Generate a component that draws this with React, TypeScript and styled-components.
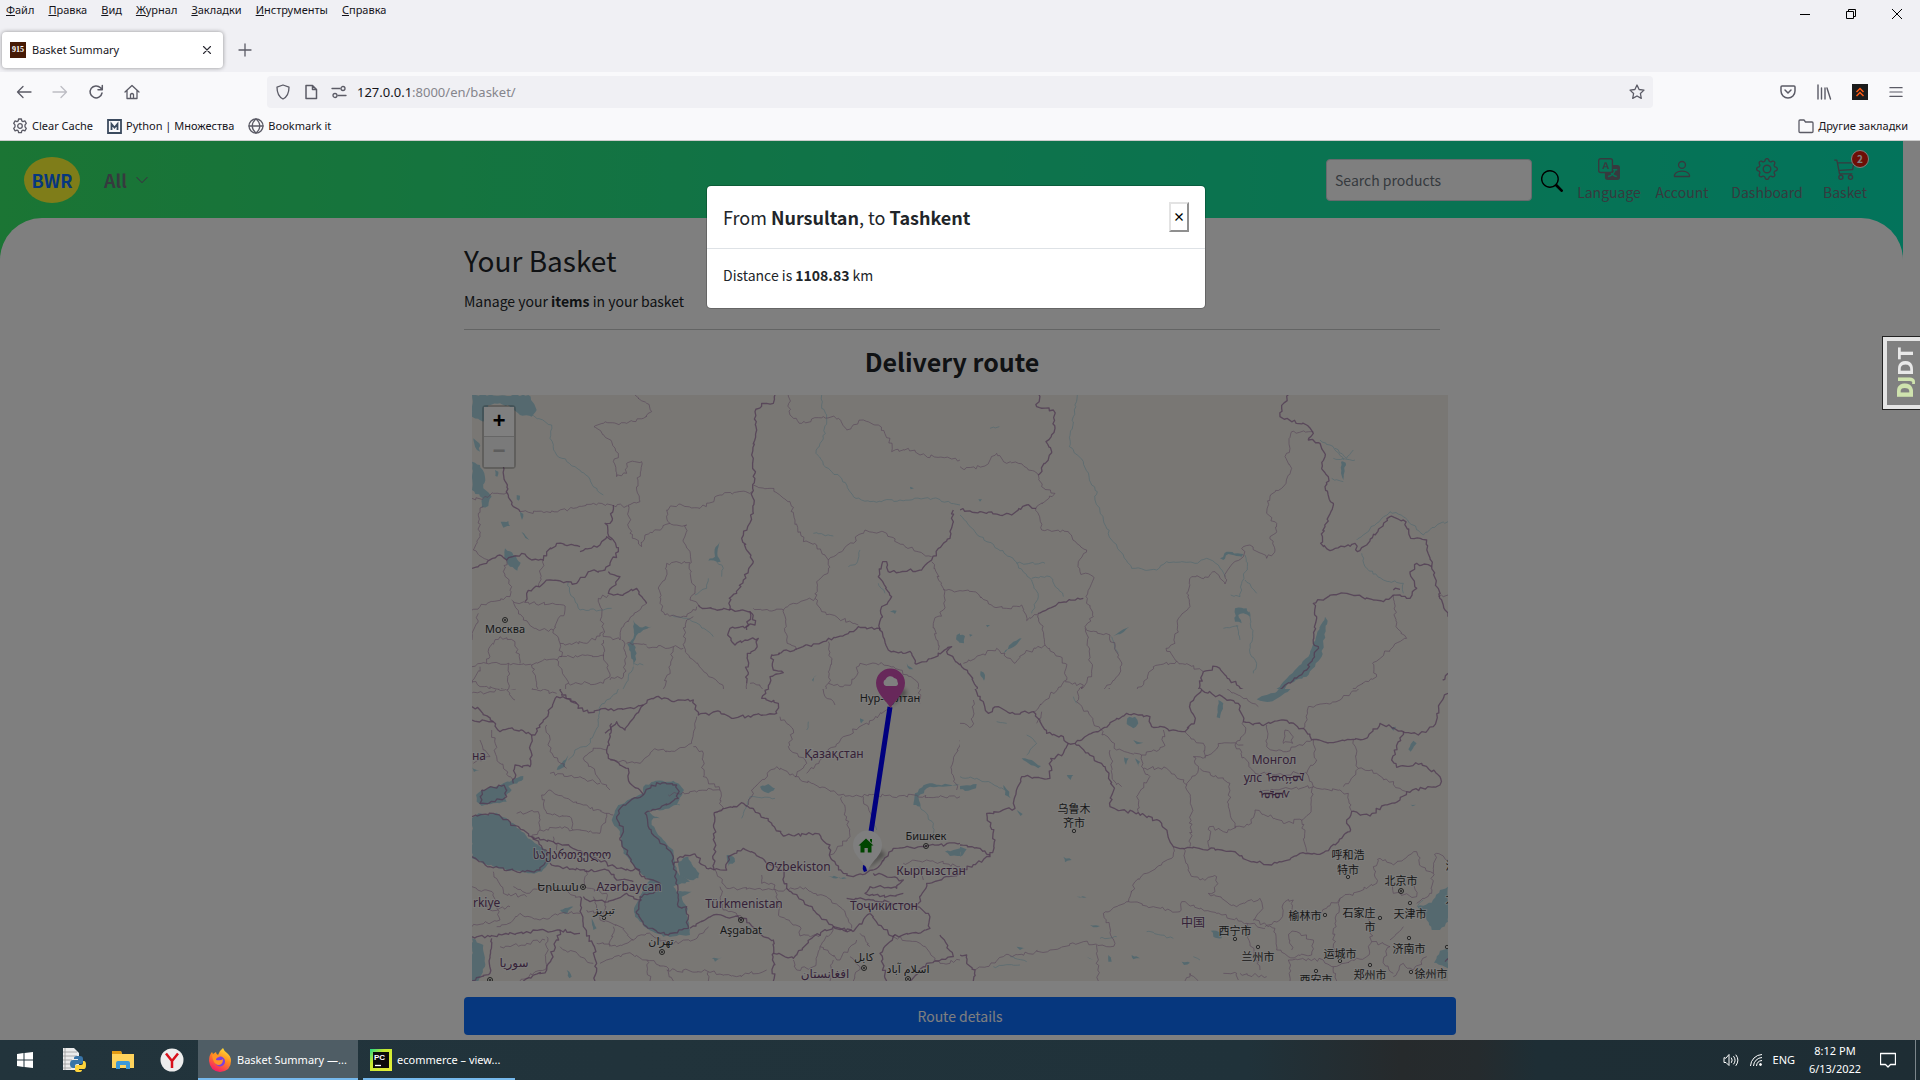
import React from 'react';
import styled, { createGlobalStyle, css } from 'styled-components';
import { BsCart3, BsChevronDown, BsGear, BsPerson, BsSearch, BsTranslate } from 'react-icons/bs';

const uiFont = `'Noto Sans', 'Open Sans', 'Noto Sans CJK SC', sans-serif`;
const pageFont = `'Noto Sans CJK SC', 'Noto Sans', sans-serif`;

const Global = createGlobalStyle`
  *, *::before, *::after { box-sizing: border-box; }
  body { margin: 0; font-family: ${pageFont}; font-size: 14px; line-height: 24px; color: #212529; }
  button, input { font: inherit; color: inherit; }
  button { border: 0; padding: 0; background: none; cursor: pointer; }
  a { color: inherit; text-decoration: none; }
  h1, h2, h3, p { margin: 0; }
  svg { display: block; flex: none; }
`;

/* ---------- browser chrome ---------- */

const Screen = styled.div`
  display: flex;
  flex-direction: column;
  height: 100vh;
  overflow: hidden;
`;

const Chrome = styled.header`
  flex: none;
  font-family: ${uiFont};
  font-size: 11px;
  line-height: 16px;
  color: #15141a;
  background: #f9f9fb;
  border-bottom: 1px solid #cccccc;
`;

const TitleArea = styled.div`
  height: 72px;
  background: #f0f0f4;
`;

const MenuRow = styled.div`
  display: flex;
  justify-content: space-between;
  height: 28px;
`;

const MenuBar = styled.nav`
  display: flex;
  align-items: flex-start;
  gap: 14px;
  padding: 2px 6px;
`;

const WindowButtons = styled.div`
  display: flex;
`;

const WindowButton = styled.button`
  display: grid;
  place-items: center;
  width: 46px;
  height: 28px;
`;

const TabRow = styled.div`
  display: flex;
  align-items: center;
  gap: 12px;
  padding: 4px 2px;
`;

const Tab = styled.div`
  display: flex;
  align-items: center;
  gap: 6px;
  width: 221px;
  height: 36px;
  padding: 0 8px;
  border-radius: 4px;
  background: #fff;
  box-shadow: 0 0 4px rgba(0, 0, 0, 0.4);

  span { flex: 1; }
`;

const Favicon = styled.i`
  display: grid;
  place-items: center;
  width: 16px;
  height: 16px;
  background: #461a05;
  color: #fff;
  font: bold 8px/16px 'Liberation Serif', serif;
`;

const IconButton = styled.button<{ $w?: number }>`
  display: grid;
  place-items: center;
  width: ${p => p.$w ?? 20}px;
  height: 20px;
  color: #5b5b66;
`;

const Toolbar = styled.div`
  display: flex;
  align-items: center;
  height: 40px;
  padding: 0 14px;
`;

const NavGroup = styled.div`
  display: flex;
  gap: 16px;
`;

const UrlBar = styled.div`
  display: flex;
  flex: 1;
  align-items: center;
  gap: 8px;
  height: 32px;
  margin: 0 125px 0 125px;
  padding: 0 6px;
  border-radius: 4px;
  background: #f0f0f4;
`;

const Address = styled.a`
  flex: 1;
  font-size: 13px;
  line-height: 20px;
  color: #85858c;

  b { font-weight: 400; color: #15141a; }
`;

const Bookmarks = styled.div`
  display: flex;
  align-items: center;
  gap: 14px;
  height: 28px;
  padding: 0 12px;
`;

const Bookmark = styled.a<{ $end?: boolean }>`
  display: flex;
  align-items: center;
  gap: 4px;
  color: #15141a;
  ${p => p.$end && css`margin-left: auto;`}
`;

/* ---------- shop page ---------- */

const Viewport = styled.div`
  position: relative;
  flex: 1;
  min-height: 0;
  overflow: hidden;
  background: #fff;
`;

const Banner = styled.div`
  margin-right: 17px;
  background: linear-gradient(90deg, #36ea68, #1ee694 48%, #06e6b6);
`;

const NavBar = styled.div`
  display: flex;
  align-items: center;
  height: 77px;
  padding: 0 22px 0 24px;
`;

const Brand = styled.a`
  display: grid;
  place-items: center;
  width: 56px;
  height: 46px;
  border-radius: 50%;
  background: #fffb32;
  color: #0d6efd;
  font-size: 18px;
  font-weight: 700;
`;

const Category = styled.button`
  display: flex;
  align-items: center;
  gap: 8px;
  margin-left: 24px;
  color: #6c757d;
  font-size: 18px;
  font-weight: 700;
`;

const Search = styled.form`
  display: flex;
  align-items: center;
  gap: 8px;
  margin-left: auto;
`;

const SearchInput = styled.input`
  width: 206px;
  height: 42px;
  padding: 0 8px;
  border: 1px solid #ced4da;
  border-radius: 4px;
  background: #fff;

  &::placeholder { color: #6c757d; opacity: 1; }
`;

const Links = styled.nav`
  display: flex;
  align-items: center;
  margin-left: 15px;
  color: #6c757d;
  font-size: 14px;
  line-height: 20px;
`;

const NavLink = styled.a<{ $w: number }>`
  position: relative;
  display: flex;
  flex-direction: column;
  align-items: center;
  gap: 2px;
  width: ${p => p.$w}px;
`;

const Badge = styled.span`
  position: absolute;
  top: -8px;
  left: 50%;
  width: 18px;
  height: 18px;
  margin-left: 6px;
  border: 1px solid #fff;
  border-radius: 50%;
  background: #dc1c0c;
  color: #fff;
  font-size: 10px;
  font-weight: 700;
  line-height: 16px;
  text-align: center;
`;

const Sheet = styled.div`
  height: 42px;
  border-radius: 42px 42px 0 0;
  background: #fff;
`;

const Content = styled.main`
  width: 100%;
  max-width: 992px;
  margin: -20px auto 0;
`;

const Title = styled.h1`
  font-size: 28px;
  font-weight: 400;
  line-height: 40px;
`;

const Lead = styled.p`
  padding: 9px 0 16px;
`;

const Rule = styled.hr`
  height: 1px;
  margin: 0 16px 0 0;
  border: 0;
  background: #c7c8c9;
`;

const RouteTitle = styled.h2`
  padding: 13px 16px 16px 0;
  font-size: 25px;
  font-weight: 700;
  line-height: 36px;
  text-align: center;
`;

const MapBox = styled.section`
  position: relative;
  height: 586px;
  margin: 0 8px;
  overflow: hidden;
  background: #f2efe9;
`;

const ZoomControl = styled.div`
  position: absolute;
  top: 10px;
  left: 10px;
  width: 34px;
  border: 2px solid rgba(0, 0, 0, 0.2);
  border-radius: 4px;
  background-clip: padding-box;
`;

const ZoomButton = styled.button<{ $off?: boolean }>`
  display: block;
  width: 30px;
  height: 30px;
  background: ${p => (p.$off ? '#f4f4f4' : '#fff')};
  color: ${p => (p.$off ? '#bbb' : '#000')};
  border-bottom: ${p => (p.$off ? '0' : '1px solid #ccc')};
  font: bold 22px/32px 'Liberation Mono', monospace;
`;

const Primary = styled.button`
  display: block;
  width: 100%;
  height: 38px;
  margin-top: 16px;
  border-radius: 4px;
  background: #0d6efd;
  color: #fff;
`;

const Backdrop = styled.div`
  position: absolute;
  inset: 0;
  display: flex;
  justify-content: center;
  align-items: flex-start;
  padding: 44px 8px 0 0;
  background: rgba(0, 0, 0, 0.5);
`;

const Dialog = styled.div`
  width: 100%;
  max-width: 500px;
  border: 1px solid rgba(0, 0, 0, 0.2);
  border-radius: 5px;
  background: #fff;
  background-clip: padding-box;
`;

const DialogHead = styled.div`
  display: flex;
  align-items: center;
  justify-content: space-between;
  padding: 15px 16px;
  border-bottom: 1px solid #dee2e6;

  h2 { font-size: 18px; font-weight: 400; line-height: 32px; }
`;

const Close = styled.button`
  width: 20px;
  height: 30px;
  border: 2px outset #e3e3e3;
  background: #fff;
  color: #000;
  font-size: 12px;
  font-weight: 700;
  line-height: 22px;
`;

const DialogBody = styled.div`
  padding: 14px 16px 21px;
`;

const DebugHandle = styled.button`
  position: absolute;
  top: 195px;
  right: 0;
  display: grid;
  place-items: center;
  width: 38px;
  height: 74px;
  padding-left: 4px;
  border: 1px solid #222;
  border-right: 0;
  background: #808080;
  box-shadow: inset 4px 0 #e4e4e4, inset 0 4px #e4e4e4, inset 0 -4px #e4e4e4;
  color: #e8e8e8;
  font: bold 22px/24px 'Open Sans', sans-serif;

  span { writing-mode: vertical-rl; rotate: 180deg; }
  b { color: #cfe3ae; }
  small { font-size: 18px; }
`;

/* ---------- taskbar ---------- */

const Taskbar = styled.footer`
  display: flex;
  flex: none;
  align-items: stretch;
  height: 40px;
  background: linear-gradient(90deg, #22343c, #20323a 65%, #262a2c 73%, #252b2e 77%, #1e2e35 80%, #1e2d34);
  color: #fff;
  font-family: ${uiFont};
  font-size: 11px;
  line-height: 18px;
`;

const Pin = styled.button`
  display: grid;
  place-items: center;
  width: 49px;
`;

const Task = styled.button<{ $active?: boolean }>`
  display: flex;
  align-items: center;
  gap: 5px;
  width: ${p => (p.$active ? 160 : 152)}px;
  margin-left: ${p => (p.$active ? 2 : 5)}px;
  padding: 0 ${p => (p.$active ? 10 : 7)}px;
  border-bottom: 2px solid #76b9ed;
  border-top: 2px solid transparent;
  background: ${p => (p.$active ? '#4f5d65' : 'transparent')};
  background-clip: border-box;
  white-space: nowrap;
`;

const Tray = styled.div`
  display: flex;
  align-items: center;
  gap: 11px;
  margin-left: auto;
`;

const Clock = styled.time`
  width: 58px;
  margin-right: 5px;
  text-align: center;
`;

const ShowDesktop = styled.button`
  align-self: stretch;
  width: 5px;
  margin-left: 8px;
  border-left: 1px solid #7c868b;
`;

/* ---------- map drawing ---------- */

type Pt = [number, number];

const parse = (s: string): Pt[] =>
  s.trim().split(/\s+/).map(p => p.split(',').map(Number) as Pt);

/* Breaks straight runs into small irregular steps, as surveyed borders have. */
const rough = (s: string, amount: number, close = false) => {
  const pts = parse(s);
  if (close) pts.push(pts[0]);
  let seed = Math.round(pts[0][0] * 7 + pts[0][1] * 13 + 5);
  const rnd = () => {
    seed = (seed * 16807 + 11) % 2147483647;
    return (seed % 1000) / 1000 - 0.5;
  };
  let d = `M${pts[0]}`;
  for (let i = 1; i < pts.length; i++) {
    const [x0, y0] = pts[i - 1];
    const [x1, y1] = pts[i];
    const n = Math.max(1, Math.round(Math.hypot(x1 - x0, y1 - y0) / 9));
    for (let k = 1; k < n; k++) {
      const t = k / n;
      d += `L${(x0 + (x1 - x0) * t + rnd() * amount).toFixed(1)},${(y0 + (y1 - y0) * t + rnd() * amount).toFixed(1)}`;
    }
    d += `L${x1},${y1}`;
  }
  return close ? d + 'Z' : d;
};

interface MapSheet {
  at: string;
  water: string[];
  rivers: string[];
  thick: string[];
  thin: string[];
}

const sheets: MapSheet[] = [
  {
    at: 'translate(-12 -15) scale(.33333)',
    water: [
      '36,45 205,45 230,90 215,110 180,105 150,80 120,70 85,75 70,125 36,110',
      '36,245 60,255 75,290 70,325 95,350 85,378 65,382 68,355 36,330',
      '122,425 145,423 150,438 130,443', '135,505 160,525 182,548 172,572 150,560 133,535',
      '184,455 208,480 196,474', '105,270 115,275 112,290 106,288', '170,345 180,347 176,362 170,358',
      '180,395 190,402 186,420', '40,175 58,190 60,215 45,200', '780,485 772,520 782,545 745,542 765,530 764,508',
      '1490,765 1500,760 1500,790 1488,778', '1290,695 1310,692 1305,702', '1070,885 1060,905 1056,900',
      '1350,320 1362,325 1352,328', '1340,850 1360,868 1348,868',
      '520,720 540,742 575,740 535,760 520,785 530,820 520,860 512,815 502,792 520,775',
    ],
    rivers: [
      '215,105 255,125 275,135 270,175 290,225 345,260 385,290 400,320 430,345', '1085,45 1085,75 1100,115 1090,175 1068,220 1090,255 1145,295 1180,350 1230,365 1320,360 1420,355 1500,375',
      '325,605 330,640 360,690 430,690 455,685', '745,595 740,625 705,645', '770,545 790,565 785,590',
      '520,860 505,890 490,930 430,955', '635,705 680,715 720,735 760,770', '1060,460 1120,468', '520,850 550,855', '1200,510 1190,550 1165,560', '1255,610 1275,640',
    ],
    thick: [
      '945,45 940,70 905,70 885,95 890,150 875,225 885,280 878,325 880,400 845,475 880,545 850,600 830,640 808,655 810,690',
      '808,690 870,695 885,735 810,745 803,765 825,795 855,780 895,775 885,810 862,820 860,910',
      '1480,390 1470,475 1435,505 1415,540 1385,570 1285,575 1280,545 1268,545 1255,590 1295,650 1265,680 1260,750',
      '360,515 420,495 440,470 455,480', '955,820 1090,785 1180,755 1195,740 1260,745 1285,810 1355,820 1365,850 1400,845 1475,800 1460,815 1500,855',
      '960,820 935,825 940,870 970,878 930,890 925,930 905,940 915,960', '36,565 80,550 120,525 140,540 185,520 215,540 250,540 260,515 290,490 360,500',
      '810,690 740,685 715,675', '460,375 450,430 435,430 455,475 475,515 435,570 385,575 350,610 320,605 270,600 245,615 200,640 195,665',
      '580,950 640,955', '445,575 480,590 445,640 480,645 530,625 560,670', '870,695 860,750', '180,395 160,380 145,345 130,260',
    ],
    thin: [
      '525,45 560,70 575,95 550,115 500,130 430,130 402,140 455,185 475,220 460,245 470,290 500,280 500,250 545,245 530,330 540,365 505,375 510,460 545,500 555,465 630,430',
      '180,395 260,395 340,385 400,370 455,375 505,380', '36,355 70,355 100,340 145,340', '70,380 55,400 60,470 40,510 85,540',
      '630,430 620,390 660,372 720,385 780,345 875,335', '630,430 680,435 670,485 690,515 690,580 705,640 690,660 715,675',
      '985,45 990,105 1025,130 1090,110 1135,115 1160,150 1210,120 1255,135 1290,175 1295,215 1345,205 1380,225 1500,240',
      '880,315 930,325 990,365 1005,420 1030,485 1070,495 1105,540 1105,575 1070,605 1065,655 1000,670 970,690 880,685',
      '1105,540 1145,515 1215,450 1280,460 1335,500 1415,530', '1415,545 1450,625 1450,690 1420,730 1435,810', '1450,628 1500,632',
      '620,550 690,548', '620,550 615,600 600,615 600,670 615,705 680,710 710,680', '560,670 490,740 480,780 430,770 425,710 415,655 445,645',
      '970,690 980,780 1010,810', '1065,655 1085,695 1195,735', '670,770 680,720 700,710', '670,770 680,820 740,880 790,920 820,950 855,945 860,910',
      '155,660 190,720 235,750 280,750 315,690 310,675 160,665', '36,690 60,680 150,650 155,620 130,575 140,540', '250,540 235,620',
      '36,780 55,700', '280,750 300,790 305,830 260,840 215,855 145,850 80,850 36,860', '80,850 90,800 120,770 165,785 180,850',
      '300,790 380,790 430,755', '290,840 325,910 300,960', '300,830 430,825 450,890 430,910 325,910', '430,830 430,780', '485,780 500,830 490,890 450,900',
      '560,800 640,800 630,870 600,940', '36,910 60,860', '145,850 145,930 60,920 36,905', '215,855 235,930 145,935', '640,800 670,805', '1105,785 1115,840 1105,910 1140,920 1175,910 1200,850 1260,850 1320,870 1375,910 1380,960', '1105,910 1090,960', '500,790 560,795', '870,910 900,915 920,945',
    ],
  },
  {
    at: 'translate(488 -15) scale(.33333)',
    water: [
      '1095,710 1103,722 1090,790 1085,830 1065,860 1040,890 985,910 950,950 920,960 890,955 945,935 970,905 1010,865 1045,830 1070,765',
      '1143,245 1157,248 1150,300 1143,280', '780,535 800,515 850,522 845,530 805,522 790,540',
      '825,685 860,685 870,710 850,700 835,705 845,730 825,725', '185,775 165,798 130,820 160,785', '508,740 490,757 460,768 490,748',
      '0,765 15,768 12,790 0,788', '28,762 38,765 30,770', '78,735 90,735 82,742', '62,873 75,885 72,902 62,888', '55,358 66,358 60,365',
    ],
    rivers: [
      '352,45 340,110 328,200 370,245 395,315 412,335 405,360 430,420 455,480 490,525 515,565 590,570 620,545 705,550 740,535 775,555 795,590',
      '855,525 862,560 845,610 840,650 812,645', '855,600 890,640', '868,695 878,760 870,820 890,850 880,880', '1080,180 1110,195 1130,215 1150,240',
      '1120,235 1185,240', '1125,205 1160,235 1180,210', '1190,480 1250,430 1290,395 1330,410 1390,465 1440,430 1464,425',
      '0,405 60,470 150,530 215,600 235,650 215,700', '215,595 270,590 310,650', '90,145 118,140', '1205,520 1215,560 1270,600 1330,610 1330,640', '830,735 840,780', '790,745 835,738', '455,770 475,820', '1115,295 1150,305', '170,550 255,550',
    ],
    thick: [
      '237,45 230,80 280,90 285,145 258,185 275,215 235,285', '0,390 60,395 155,405 200,375 228,385', '985,45 965,85 960,110 1040,135 1060,160 1045,180 1080,190 1095,230 1085,265 1105,290 1095,320 1120,370 1095,440 1082,490 1110,512 1185,490 1192,515 1220,495 1290,410 1330,420 1352,475 1400,480 1415,560 1370,550 1350,580 1370,625 1350,655 1300,645',
      '1300,645 1270,665 1240,660 1160,640 1105,650 1060,670 1070,710 1060,790 1075,800 1040,870 975,915 920,960', '730,875 770,860 830,915 875,945', '730,875 720,915 705,960', '0,850 30,885 65,960', '1300,630 1320,628', '1415,560 1430,620 1455,690 1464,710', '720,925 800,955', '1464,880 1448,900', '235,700 300,668 370,655',
    ],
    thin: [
      '235,285 245,320 285,340 228,385 245,450 325,455 350,490 380,510 355,545 360,575 400,590 378,650 400,710 375,740 385,800 395,880 350,955',
      '0,260 15,268 75,258 110,220 140,250 175,250 205,270 235,285', '0,632 40,635 95,675 140,685 185,675 200,722 235,700 255,795 315,850 320,900 270,960',
      '10,850 110,805 165,850 195,820 255,795', '1060,155 995,155 990,205 975,230 995,265 965,325 930,350 920,400 950,430 950,455 930,470 945,510 920,535 870,495 850,500 850,530 800,575 795,612 765,575 745,592 695,590 680,640 690,680 660,710 645,790 618,805 650,843 730,875',
      '650,843 580,860 545,920 510,945 440,940 450,925', '375,745 450,765 485,855 470,890 430,930 420,960', '1300,645 1308,740 1340,775 1300,800 1238,850 1250,890 1180,925 1130,960', '315,905 370,915 350,940', '1435,650 1464,645',
    ],
  },
  {
    at: 'translate(-12 285) scale(.33333)',
    water: [
      '36,415 55,400 85,405 110,398 160,430 185,455 225,490 270,520 272,545 245,575 215,580 150,572 100,560 36,535',
      '48,345 65,330 100,320 130,310 190,288 185,302 145,318 155,330 135,350 140,365 100,370 65,378 50,365',
      '455,420 475,375 550,340 550,320 580,305 640,302 660,315 672,330 650,375 610,390 565,390 585,410 600,415 580,415 575,435 595,465 610,480 640,510 645,555 655,580 690,605 665,610 640,620 650,635 695,635 665,650 680,680 690,765 650,768 610,770 560,745 525,710 522,685 545,640 570,600 520,555 490,520 480,455',
      '655,545 685,530 700,560 718,580 715,595 690,600 660,590', '36,775 70,795 75,860 55,903 36,903', '800,525 820,530 825,545 805,558',
      '1500,315 1410,320 1375,350 1382,380 1360,375 1365,340 1400,312', '900,320 925,312 945,325 925,340 905,330', '1455,515 1500,505 1500,528 1470,528', '1200,115 1212,120 1203,130', '325,225 315,260 290,270 305,250', '300,690 340,680 325,692 315,702', '320,870 335,890 328,895',
      '395,715 410,745 400,750', '36,262 58,270 42,276', '1105,588 1160,595 1120,595', '755,835 785,832 765,845',
    ],
    rivers: ['495,0 470,40 420,80 415,130 385,195 345,210 325,240', '660,375 600,370', '945,355 870,350 850,400 845,415', '1240,430 1250,450', '1045,125 1040,150', '1380,380 1420,430 1420,470'],
    thick: [
      '370,95 500,85 550,75 590,50 640,65 700,60 715,105 780,95 820,115 880,105 950,100 955,70 905,55 930,20 905,0', '370,95 345,65 290,50 250,120 225,165 150,145 120,155 100,125 36,120', '350,70 305,45 300,0',
      '435,160 470,125 495,150 530,100 550,75', '455,130 440,210 445,235 505,265 510,310 550,345', '215,165 210,260 165,255 160,310', '36,80 60,90 100,125',
      '763,570 763,398 850,370 935,430 970,468 1065,460 1110,495 1108,525 1150,580 1180,590 1240,570', '763,570 740,565 705,522 660,530 640,555', '763,570 800,570 805,530 850,505 885,520 920,550 965,570 980,625 1060,690 1125,745 1175,750',
      '690,745 760,705 850,715 910,770 940,780 940,903', '1240,570 1300,505 1380,500 1500,490', '215,470 330,500 400,530 470,565 540,570', '370,650 390,665 460,660 500,640 545,660', '360,650 370,740 400,795 410,850 405,903', '36,770 90,770 200,755 300,750 360,760',
      '940,820 1000,835 1060,770 1120,740 1180,755', '1180,755 1230,700 1255,735 1300,770 1375,760 1410,745 1405,700 1370,680 1400,610 1500,580', '1160,655 1240,660 1370,680', '1330,640 1260,650 1215,640 1230,620 1310,625 1330,600 1240,580',
      '1305,765 1260,820 1280,903', '270,550 300,560 360,570 440,570 470,600 520,605', '36,903 90,880 95,775', '1440,765 1480,830 1400,850 1350,903', '190,903 260,870 300,750',
      '65,330 100,322 132,315 140,350 105,365 60,370 65,330', '550,345 490,375 470,410 490,450 480,480 545,590 600,610 580,640 540,650 530,700 560,740 625,765 685,745 680,680 655,680 650,600 635,520 575,460 555,400 600,385 655,355 650,315 590,308 550,345',
      '36,410 100,400 190,450 265,520 240,570 180,578 90,560 36,530',
    ],
    thin: [
      '135,0 140,25 90,35 36,40', '165,60 140,30 200,20 290,40', '260,135 270,215 320,265', '440,210 410,205 370,235 420,300 450,330', '245,345 270,330 320,355 370,375 435,400 460,405', '245,345 260,400 330,410 340,450 420,460 440,400', '170,400 235,395 240,450 215,470', '450,240 540,250 580,210 630,215 695,190 710,110', '700,200 730,220 730,290 780,330 785,390 763,398', '625,345 745,325 780,330',
      '960,110 1000,150 985,200 1040,250 1005,290 950,260 885,320 865,375', '1005,290 1140,345 1500,350', '1145,350 1160,410 1170,470 1110,525', '1210,350 1240,430', '1040,280 1150,170 1240,120 1290,80', '1090,0 1095,50 1125,75', '1380,0 1380,70', '1500,180 1475,270 1490,330',
      '765,570 800,625 900,625 985,630', '905,585 905,610 945,615 960,710 1020,740 1020,768 1080,765', '160,620 200,640 250,620 310,630 360,650', '36,620 100,640 120,720 36,740', '180,700 240,720 300,700 360,700', '100,575 130,640 200,650', '260,770 260,860 180,903', '400,650 420,720 480,740 520,780 470,800 410,790', '420,850 500,820 560,840 620,860 640,903', '520,780 560,760 620,790 700,780 745,740', '620,870 745,875 830,890 920,870', '745,875 745,903', '1000,840 1010,870 1060,860 1080,800 1120,745', '1080,800 1140,840 1190,780', '1100,650 1060,640 1020,620 985,630', '1100,650 1150,690 1175,745', '1330,550 1400,540 1500,560', '270,280 360,290 420,310', '380,570 375,620 440,640', '60,180 90,230 40,250', '95,150 110,230 160,300', '780,620 790,690 860,715', '1300,770 1380,790 1440,850 1500,840', '300,800 360,830 400,850', '1170,830 1200,860 1180,903',
      '240,450 300,440 340,450', '280,470 290,510', '120,800 200,790 255,780', '440,640 430,700 380,690', '60,660 90,690 150,680', '460,740 450,800', '560,840 570,903', '1120,840 1110,903', '1230,800 1200,760', '110,740 160,720 180,700', '1380,560 1390,600',
    ],
  },
  {
    at: 'translate(488 285) scale(.33333)',
    water: [
      '890,58 920,45 950,35 985,5 1015,0 995,25 960,50 930,65 900,62', '775,60 790,70 780,115 770,112', '502,115 525,110 535,130 520,145 500,132', '185,235 215,240 243,258 235,265 205,250', '0,318 50,312 48,325 25,332 0,328', '130,315 148,335 152,355 135,345', '1360,182 1370,190 1352,215 1345,208',
      '1464,620 1440,630 1415,668 1372,680 1400,720 1415,750 1440,750 1464,725', '1464,805 1440,812 1422,848 1464,865', '752,752 790,755 785,775 760,770', '310,530 335,540 315,547', '520,180 550,188 530,193', '320,285 340,285 332,300', '525,235 540,245 535,260', '492,232 506,235 498,255', '1290,138 1308,140 1300,152', '170,390 188,402 182,408', '665,845 690,848 672,855', '390,735 420,738 400,742', '0,500 20,508 0,530', '1352,374 1368,374 1358,379', '170,800 195,805 180,810', '515,825 540,835 520,838', '350,650 380,652', '380,830 400,840', '445,825 455,845 445,845',
    ],
    rivers: ['200,165 230,190 200,225', '0,290 50,295 95,310 135,330', '110,125 140,130', '1372,680 1390,660', '340,50 350,70', '150,830 200,845', '420,775 470,770', '560,755 640,775', '700,830 720,840', '100,860 180,855'],
    thick: [
      '30,0 85,100 115,80 150,100 220,95 260,160 310,170 325,190 345,190 410,155 500,100 570,110 575,140 675,155 705,120 690,75 725,30 835,70 850,125 905,135 970,120 1030,145 1055,180 1120,188 1210,178 1260,130 1330,155 1375,165 1420,140 1440,70 1464,40',
      '345,190 435,260 460,320 450,380 475,392 535,398 605,430 640,500 785,510 830,520 860,540 935,555 1020,520 1090,518 1145,475 1170,455 1160,420 1175,395 1230,408 1265,378 1320,360 1340,335 1440,315 1440,290 1385,250 1310,262 1295,240 1330,155',
      '325,190 310,220 272,235 270,295 185,290 160,370 165,385 80,400 105,480 90,530 0,575', '90,525 60,505 0,495', '725,30 725,0', '0,825 20,825 20,850 45,870 40,903', '1464,835 1455,845',
    ],
    thin: [
      '245,95 230,130', '220,95 270,45 320,10', '420,145 350,65 360,0', '420,145 470,210 545,225 610,200 610,150', '450,210 460,300 485,320', '545,225 550,265 570,290 530,350 535,398', '550,265 620,265 680,315 715,270 700,230 730,235 785,190 850,195', '680,315 695,380 690,500', '675,155 735,200 735,235', '850,125 855,160 825,195 885,280', '720,265 810,310 805,380 825,445', '885,390 865,435 790,455 748,440 748,505', '885,390 970,430 1025,420 1040,515', '920,135 920,200 970,215 1055,180', '975,150 970,190 998,190 995,165 975,150', '1060,180 1070,240 1040,280 1060,320 1050,400 1025,420', '900,330 1060,320 1165,340 1175,395', '885,280 1040,280', '1180,180 1195,265 1250,280 1320,325 1340,335', '1150,320 1195,265', '0,130 35,140 40,60', '1030,145 1045,80 1140,60 1200,20 1270,0', '725,0 860,55 895,80',
      '640,500 635,535 560,580 525,605 505,665 430,700 465,790 440,800 370,785 270,810 130,830 80,860 45,870', '670,505 690,580 720,600 770,590 765,635 745,640 830,680 900,655 905,690 880,720 945,745 950,810 985,830 1055,825 1060,780 1010,755 990,760 995,810', '505,665 580,680 660,695 665,665 770,700 860,730 915,745', '915,740 960,720 975,665 1000,660 990,710 1075,700 1140,655', '1140,655 1125,730 1120,830', '1140,655 1250,610 1240,560 1260,535 1300,555 1370,515 1385,560 1420,580 1415,640 1370,670', '1420,580 1430,520 1464,540', '1300,610 1300,640 1370,650 1360,610', '1230,700 1235,785 1220,830 1120,860', '1235,785 1290,800 1270,840 1300,880', '1330,740 1290,780', '985,840 990,903', '985,840 1090,840 1120,860 1130,903', '675,903 690,880 715,903', '790,880 830,880 835,900', '840,880 920,890', '860,730 870,790 900,870', '410,795 415,903', '1300,890 1330,850 1360,870 1400,830', '1400,890 1440,870',
    ],
  },
];

interface Label {
  x: number;
  y: number;
  text: string;
  country?: boolean;
  anchor?: 'start' | 'middle' | 'end';
}

const labels: Label[] = [
  { x: 33, y: 238, text: 'Москва' },
  { x: 418, y: 307, text: 'Нур-Султан' },
  { x: 362, y: 363, text: 'Қазақстан', country: true },
  { x: 454, y: 445, text: 'Бишкек' },
  { x: 459, y: 480, text: 'Кыргызстан', country: true },
  { x: 326, y: 476, text: 'Oʻzbekiston', country: true },
  { x: 412, y: 515, text: 'Тоҷикистон', country: true },
  { x: 272, y: 513, text: 'Türkmenistan', country: true },
  { x: 269, y: 539, text: 'Aşgabat' },
  { x: 157, y: 496, text: 'Azərbaycan', country: true },
  { x: 100, y: 464, text: 'საქართველო', country: true },
  { x: 86, y: 496, text: 'Երևան' },
  { x: 0, y: 365, text: 'на', country: true, anchor: 'start' },
  { x: 1, y: 512, text: 'rkiye', country: true, anchor: 'start' },
  { x: 132, y: 519, text: 'تبریز' },
  { x: 189, y: 550, text: 'تهران' },
  { x: 42, y: 572, text: 'سوريا', country: true },
  { x: 392, y: 566, text: 'کابل' },
  { x: 353, y: 583, text: 'افغانستان', country: true },
  { x: 436, y: 578, text: 'اسلام آباد' },
  { x: 802, y: 369, text: 'Монгол', country: true },
  { x: 781, y: 387, text: 'улс', country: true },
  { x: 813, y: 387, text: 'ᠮᠣᠩᠭᠣᠯ', country: true },
  { x: 802, y: 404, text: 'ᠤᠯᠤᠰ', country: true },
  { x: 602, y: 418, text: '乌鲁木' },
  { x: 602, y: 432, text: '齐市' },
  { x: 876, y: 464, text: '呼和浩' },
  { x: 876, y: 479, text: '特市' },
  { x: 929, y: 490, text: '北京市' },
  { x: 938, y: 523, text: '天津市' },
  { x: 833, y: 525, text: '榆林市' },
  { x: 887, y: 522, text: '石家庄' },
  { x: 898, y: 536, text: '市' },
  { x: 937, y: 558, text: '济南市' },
  { x: 868, y: 563, text: '运城市' },
  { x: 898, y: 584, text: '郑州市' },
  { x: 959, y: 583, text: '徐州市' },
  { x: 844, y: 589, text: '西安市' },
  { x: 786, y: 566, text: '兰州市' },
  { x: 763, y: 540, text: '西宁市' },
  { x: 721, y: 532, text: '中国', country: true },
  { x: 979, y: 475, text: '沈' },
  { x: 979, y: 508, text: '大' },
];

const capitals: Pt[] = [[33, 225], [454, 451], [111, 492], [269, 525], [190, 557], [392, 573], [436, 584], [929, 496], [18, 585]];
const towns: Pt[] = [[602, 436], [876, 482], [938, 508], [853, 520], [908, 523], [937, 543], [868, 566], [898, 570], [939, 577], [844, 576], [786, 552], [763, 544], [132, 523], [975, 552]];

const MapArt = styled.svg`
  width: 100%;
  height: 100%;

  text { font-family: 'Noto Sans', 'DejaVu Sans', 'Noto Sans CJK SC', sans-serif; font-size: 11px; fill: #333; stroke: rgba(255, 255, 255, 0.6); stroke-width: 2px; paint-order: stroke; }
  text.country { font-size: 12px; fill: #6c4470; }
`;

const RouteMap = () => (
  <MapArt viewBox="0 0 976 586" preserveAspectRatio="xMidYMid slice" role="img" aria-label="Delivery route map">
    <defs>
      <filter id="shade" x="-50%" y="-50%" width="200%" height="200%"><feGaussianBlur stdDeviation="2" /></filter>
      {sheets.map((s, i) => (
        <clipPath id={`q${i}`} key={s.at}>
          <rect x={i % 2 ? 488 : 0} y={i > 1 ? 294 : 0} width="488" height={i > 1 ? 292 : 294} />
        </clipPath>
      ))}
    </defs>
    {sheets.map((s, i) => (
      <g key={s.at} clipPath={`url(#q${i})`}>
        <g transform={s.at} fill="none" strokeLinejoin="round">
          {s.water.map(w => <path key={w} d={rough(w, 6, true)} fill="#aad3df" />)}
          {s.rivers.map(w => <path key={w} d={rough(w, 7)} stroke="#aad3df" strokeWidth="3" opacity=".7" />)}
          {s.thin.map(w => <path key={w} d={rough(w, 11)} stroke="#b58fb5" strokeWidth="3" opacity=".65" />)}
          {s.thick.map(w => <path key={w} d={rough(w, 10)} stroke="#a379a6" strokeWidth="4" opacity=".8" />)}
        </g>
      </g>
    ))}
    {capitals.map(([x, y]) => (
      <g key={`${x} ${y}`}><circle cx={x} cy={y} r="2.5" fill="none" stroke="#444" /><circle cx={x} cy={y} r="1" fill="#444" /></g>
    ))}
    {towns.map(([x, y]) => <circle key={`${x} ${y}`} cx={x} cy={y} r="1.7" fill="#f2efe9" stroke="#555" />)}
    {labels.map(l => (
      <text key={l.text + l.x} x={l.x} y={l.y} textAnchor={l.anchor ?? 'middle'} className={l.country ? 'country' : undefined}>{l.text}</text>
    ))}
    <path d="M418 312 L399 437" stroke="#0000ff" strokeWidth="5" />
    <path d="M391 470 Q394 470 395 476 L392 477 Q390 474 391 470" fill="#0000ff" />
    <path d="M418 312 L436 298 L430 292Z M394 475 L414 460 L408 454Z" fill="#000" opacity=".35" filter="url(#shade)" />
    <path d="M418.500 313 C413 304 404 298 404 288 A14.500 14.500 0 0 1 433 288 C433 298 424 304 418.500 313Z" fill="#cf51b5" />
    <path d="M414 291 A3.500 3.500 0 0 1 413.500 284.500 A5 5 0 0 1 422 283 A4 4 0 0 1 425.500 287 A2.500 2.500 0 0 1 424 291Z" fill="#fff" />
    <path d="M396 475 C391 465 381 461 381 450 A14 14 0 0 1 410 450 C410 461 400 465 396 475Z" fill="#fcfcfc" />
    <path d="M394 443.500 L401.500 450.500 H399.500 V457.500 H395.800 V453 H392.500 V457.500 H388.500 V450.500 H386.500Z M398 444 H400 V448 L398 446Z" fill="#008a00" />
  </MapArt>
);

/* ---------- small drawings ---------- */

const Line = ({ d, size = 16, w = 1.3, color = 'currentColor', children }: { d?: string; size?: number; w?: number; color?: string; children?: React.ReactNode }) => (
  <svg width={size} height={size} viewBox="0 0 16 16" fill="none" stroke={color} strokeWidth={w} strokeLinecap="round" strokeLinejoin="round">
    {d && <path d={d} />}
    {children}
  </svg>
);

const gearPath = 'M6.600 1h2.800l.4 1.900 1.200.7 1.900-.7 1.400 2.400-1.300 1.600v2l1.300 1.500-1.400 2.400-1.900-.7-1.200.7-.4 1.900H6.600l-.4-1.900-1.200-.7-1.900.7-1.400-2.400 1.300-1.500v-2L1.700 5.300l1.400-2.400 1.900.7 1.200-.7z';

const PythonIcon = () => (
  <svg width="24" height="26" viewBox="0 0 24 26">
    <path d="M1 1h11l5 5v17H1z" fill="#ececec" />
    <path d="M3 1v22M1 5h14M1 9h14M1 13h9M1 17h8M1 21h8" stroke="#999" strokeWidth=".8" />
    <path d="M15 9h3q3 0 3 3v3q0 2-2 2h-4q-2 0-2 2v2h-2q-3 0-3-4t3-4h5v-1h-4v-1q0-2 3-2" fill="#3874a8" />
    <path d="M17 25h-1q-3 0-3-2v-3q0-2 2-2h4q2 0 2-2v-2h1q2 0 2 4t-2 4h-5v1h3q0 2-3 2" fill="#ffd43b" />
  </svg>
);

const FolderIcon = () => (
  <svg width="22" height="20" viewBox="0 0 22 20">
    <path d="M0 1h9l1 3h12v14H0z" fill="#ffd35c" />
    <path d="M0 1h9l1 3H0z" fill="#e29b14" />
    <path d="M4 19v-6q0-2 2-2h10q2 0 2 2v6h-4v-4H8v4z" fill="#3c99d8" />
  </svg>
);

const YandexIcon = () => (
  <svg width="24" height="24" viewBox="0 0 24 24">
    <circle cx="12" cy="12" r="11.500" fill="#ededed" />
    <path d="M6 5.500l6 7.500 6-7.500M12 13v7" fill="none" stroke="#d8101b" strokeWidth="2.500" />
  </svg>
);

const FirefoxIcon = () => (
  <svg width="24" height="24" viewBox="0 0 24 24">
    <defs>
      <linearGradient id="fox" x1=".8" y1="0" x2=".3" y2="1"><stop offset="0" stopColor="#ffe83c" /><stop offset=".45" stopColor="#ff8a1e" /><stop offset="1" stopColor="#f5156c" /></linearGradient>
    </defs>
    <path d="M15 0q1 3 4 5 4 3 4 8 0 10-11 11Q2 23 1 13q0-6 3-9l1 2 3-2q0 2 2 3 2-5 5-7" fill="url(#fox)" />
    <circle cx="12" cy="13.500" r="5" fill="#7a3fe0" />
    <path d="M4 7q5-2 8 2-4 0-4 3 5 1 7-1 0 6-5 6-5-1-6-10" fill="#ff9426" />
  </svg>
);

const PyCharmIcon = () => (
  <svg width="22" height="22" viewBox="0 0 22 22">
    <defs><linearGradient id="pc" x1="0" y1="0" x2="1" y2="1"><stop offset="0" stopColor="#21d789" /><stop offset=".35" stopColor="#c6e830" /><stop offset="1" stopColor="#e8f03a" /></linearGradient></defs>
    <rect width="22" height="22" fill="url(#pc)" /><rect x="3" y="3" width="16" height="16" fill="#0b0b0b" />
    <text x="4" y="11" fill="#fff" fontFamily="Liberation Sans, sans-serif" fontWeight="700" fontSize="8">PC</text>
    <path d="M5 16.500h6" stroke="#fff" strokeWidth="1.300" />
  </svg>
);

const menus = ['Файл', 'Правка', 'Вид', 'Журнал', 'Закладки', 'Инструменты', 'Справка'];

export default function App() {
  return (
    <Screen>
      <Global />
      <Chrome>
        <TitleArea>
          <MenuRow>
            <MenuBar>
              {menus.map(m => <a href="#menu" key={m}><u>{m[0]}</u>{m.slice(1)}</a>)}
            </MenuBar>
            <WindowButtons>
              <WindowButton aria-label="Minimize"><svg width="10" height="10"><path d="M0 5.500h10" stroke="#000" /></svg></WindowButton>
              <WindowButton aria-label="Restore"><svg width="10" height="10" fill="none" stroke="#000"><path d="M.5 2.500h7v7h-7zM2.500 2.500v-2h7v7h-2" /></svg></WindowButton>
              <WindowButton aria-label="Close window"><svg width="10" height="10"><path d="M0 0l10 10M10 0L0 10" stroke="#000" /></svg></WindowButton>
            </WindowButtons>
          </MenuRow>
          <TabRow>
            <Tab>
              <Favicon>915</Favicon>
              <span>Basket Summary</span>
              <IconButton $w={16} aria-label="Close tab"><Line color="#2b2a33" size={14} w={1.3} d="M4 4l8 8M12 4l-8 8" /></IconButton>
            </Tab>
            <IconButton aria-label="New tab"><Line d="M8 2v12M2 8h12" /></IconButton>
          </TabRow>
        </TitleArea>
        <Toolbar>
          <NavGroup>
            <IconButton aria-label="Back"><Line d="M15 8H1.500M7 2.500L1.500 8 7 13.500" /></IconButton>
            <IconButton aria-label="Forward"><Line color="#bdbdc3" d="M1 8h13.500M9 2.500L14.500 8 9 13.500" /></IconButton>
            <IconButton aria-label="Reload"><Line w={1.5} d="M14 9a6 6 0 1 1-1.500-5.200L14 5.500M14.300 1.500v4.300H10" /></IconButton>
            <IconButton aria-label="Home"><Line d="M1 8l7-6.500L15 8M3 6.500v8h10v-8M6.500 14.500v-4q1.500-2 3 0v4" /></IconButton>
          </NavGroup>
          <UrlBar>
            <IconButton aria-label="Protection"><Line d="M8 1l6 2.200c0 6-1.500 9.500-6 11.800C3.500 12.700 2 9.200 2 3.200z" /></IconButton>
            <IconButton aria-label="Page"><Line w={1.5} d="M3 1.500h6.500l4 4v9H3zM9.500 1.500v4h4z" /></IconButton>
            <IconButton aria-label="Permissions"><Line d="M1 4.500h8M7 11.500h8"><circle cx="12" cy="4.500" r="2" /><circle cx="4" cy="11.500" r="2" /></Line></IconButton>
            <Address href="#basket"><b>127.0.0.1</b>:8000/en/basket/</Address>
            <IconButton aria-label="Bookmark page"><Line d="M8 1l2.100 4.500 4.900.6-3.600 3.400.9 4.900L8 12l-4.300 2.400.9-4.900L1 6.100l4.900-.6z" /></IconButton>
          </UrlBar>
          <NavGroup>
            <IconButton aria-label="Pocket"><Line w={1.5} d="M2 2h12q1 0 1 1v4a7 7 0 0 1-14 0V3q0-1 1-1zM5 6l3 3 3-3" /></IconButton>
            <IconButton aria-label="Library"><Line w={1.4} d="M2 1v14M5.500 4v11M9 4v11M11 4l3.500 11" /></IconButton>
            <IconButton aria-label="Extension"><svg width="16" height="16" fill="none"><path d="M0 0h16v16H0z" fill="#1b1b1b" /><path d="M4.500 8L8 4.500 11.500 8M4.500 12L8 8.500l3.500 3.500" stroke="#ff5a12" strokeWidth="1.500" /></svg></IconButton>
            <IconButton aria-label="Menu"><Line size={14} d="M1 3h14M1 8h14M1 13h14" /></IconButton>
          </NavGroup>
        </Toolbar>
        <Bookmarks>
          <Bookmark href="#cache"><Line color="#5b5b66" d={gearPath}><circle cx="8" cy="8" r="2.300" /></Line>Clear Cache</Bookmark>
          <Bookmark href="#python"><svg width="15" height="15" fill="none"><path d="M1 1h13v13H1zM4.500 11V5l3 3.500 3-3.500v6" stroke="#3b4a5e" strokeWidth="1.800" /></svg>Python | Множества</Bookmark>
          <Bookmark href="#bookmark"><Line color="#5b5b66" d="M1 8h14M8 1c-5 4-5 10 0 14M8 1c5 4 5 10 0 14"><circle cx="8" cy="8" r="7" /></Line>Bookmark it</Bookmark>
          <Bookmark href="#other" $end><Line color="#5b5b66" d="M1 13.500V3q0-1 1-1h4l1.500 2H14q1 0 1 1v8.500q0 1-1 1H2q-1 0-1-1z" />Другие закладки</Bookmark>
        </Bookmarks>
      </Chrome>

      <Viewport>
        <Banner>
          <NavBar>
            <Brand href="#home">BWR</Brand>
            <Category>All <BsChevronDown size={14} /></Category>
            <Search>
              <SearchInput type="search" placeholder="Search products" aria-label="Search products" />
              <IconButton $w={24} type="button" aria-label="Search"><BsSearch size={22} color="#000" /></IconButton>
            </Search>
            <Links>
              <NavLink $w={60} href="#language"><BsTranslate size={22} />Language</NavLink>
              <NavLink $w={86} href="#account"><BsPerson size={22} />Account</NavLink>
              <NavLink $w={84} href="#dashboard"><BsGear size={22} />Dashboard</NavLink>
              <NavLink $w={72} href="#basket"><BsCart3 size={22} />Basket<Badge>2</Badge></NavLink>
            </Links>
          </NavBar>
          <Sheet />
        </Banner>
        <Content>
          <Title>Your Basket</Title>
          <Lead>Manage your <b>items</b> in your basket</Lead>
          <Rule />
          <RouteTitle>Delivery route</RouteTitle>
          <MapBox>
            <RouteMap />
            <ZoomControl>
              <ZoomButton aria-label="Zoom in">+</ZoomButton>
              <ZoomButton $off aria-label="Zoom out">−</ZoomButton>
            </ZoomControl>
          </MapBox>
          <Primary>Route details</Primary>
        </Content>
        <Backdrop>
          <Dialog role="dialog" aria-labelledby="route-title">
            <DialogHead>
              <h2 id="route-title">From <b>Nursultan</b>, to <b>Tashkent</b></h2>
              <Close aria-label="Close">×</Close>
            </DialogHead>
            <DialogBody>Distance is <b>1108.83</b> km</DialogBody>
          </Dialog>
        </Backdrop>
        <DebugHandle><span><b>D</b><b><small>J</small></b>DT</span></DebugHandle>
      </Viewport>

      <Taskbar>
        <Pin aria-label="Start"><svg width="16" height="16" fill="#fff"><path d="M0 2l6.500-1v6.500H0zM7.500 1L16 0v7.500H7.500zM0 8.500h6.500V15L0 14zM7.500 8.500H16V16l-8.500-1z" /></svg></Pin>
        <Pin aria-label="Python"><PythonIcon /></Pin>
        <Pin aria-label="Explorer"><FolderIcon /></Pin>
        <Pin aria-label="Yandex"><YandexIcon /></Pin>
        <Task $active><FirefoxIcon />Basket Summary —...</Task>
        <Task><PyCharmIcon />ecommerce – view...</Task>
        <Tray>
          <Line color="#fff" w={1} d="M1 6v4.500h2L6 13.500v-11L3 6zM8.500 6q1.500 2 0 4.500M10.700 4.500q3 3.700 0 7.500M13 3q4 5 0 10.500" />
          <svg width="12" height="14" fill="none" stroke="#fff"><path d="M.5 13A12 12 0 0 1 12 1.500M3.500 13A9 9 0 0 1 12 4.500M6.500 13A6 6 0 0 1 12 7.500" /><circle cx="10.500" cy="11.500" r="1" fill="#fff" /></svg>
          <span>ENG</span>
          <Clock>8:12 PM<br />6/13/2022</Clock>
          <Line color="#fff" d="M.5 1.500h15v11h-5L8 15l-2.500-2.500h-5z" />
          <ShowDesktop aria-label="Show desktop" />
        </Tray>
      </Taskbar>
    </Screen>
  );
}
